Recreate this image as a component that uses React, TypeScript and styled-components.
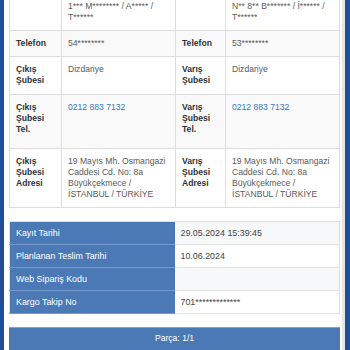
import styled, { createGlobalStyle } from "styled-components";

const GlobalStyle = createGlobalStyle`
  html, body {
    margin: 0;
    padding: 0;
    background: #1d4f9a;
  }
  * {
    box-sizing: border-box;
  }
`;

const Frame = styled.div`
  display: flex;
  width: 350px;
  height: 350px;
  overflow: hidden;
  padding: 0 5px 0 4px;
  background: #1d4f9a;
  font-family: "Liberation Sans", Arial, sans-serif;
`;

const Panel = styled.div`
  flex: 1;
  display: flex;
  flex-direction: column;
  gap: 13px;
  padding: 0 2px 0 5px;
  background: #fff;
  border-right: 3px solid #e6e6e6;
`;

const InfoTable = styled.table`
  width: 100%;
  margin-top: -7px;
  border-collapse: collapse;
  table-layout: fixed;
  font-size: 8.6px;
  line-height: 11px;
  border: 1px solid #dddddd;
`;

const InfoRow = styled.tr<{ $minH?: number }>`
  height: ${(p) => (p.$minH ? `${p.$minH}px` : "auto")};
  &:nth-child(even) {
    background: #f9f9f9;
  }
`;

const Label = styled.td`
  vertical-align: top;
  padding: 7px 6px;
  border: 1px solid #dddddd;
  color: #333;
  font-weight: bold;
`;

const Value = styled.td`
  vertical-align: top;
  padding: 7px 6px;
  border: 1px solid #dddddd;
  color: #5a5a5a;
`;

const Phone = styled.a`
  color: #3f78bd;
  text-decoration: none;
`;

const Masked = styled.span`
  white-space: nowrap;
`;

const SummaryTable = styled.table`
  width: 100%;
  border-collapse: collapse;
  table-layout: fixed;
  font-size: 8.9px;
  line-height: 11px;
  border: 1px solid #dddddd;
`;

const SummaryRow = styled.tr`
  &:nth-child(odd) td:last-child {
    background: #f7f8fa;
  }
`;

const SummaryLabel = styled.td`
  width: 165px;
  padding: 5.5px 6px 5.5px;
  background: #4a79b5;
  color: #fff;
  border-bottom: 1px solid #7199cb;
`;

const SummaryValue = styled.td`
  padding: 5.5px 6px 5.5px;
  color: #444;
  background: #fff;
  border-bottom: 1px solid #e3e3e3;
`;

const PartBar = styled.div`
  padding: 5px 0 6px;
  min-height: 26px;
  background: #4a79b5;
  border-top: 1px solid #7ea3d2;
  color: #fff;
  text-align: center;
  font-size: 8.6px;
  line-height: 11px;
`;

type Side = { label: string; value: React.ReactNode };

const infoRows: { left: Side; right: Side; minH?: number }[] = [
  {
    left: {
      label: "",
      value: (
        <>
          <Masked>1*** M******** / A***** /</Masked>
          <br />
          T******
        </>
      ),
    },
    right: {
      label: "",
      value: (
        <>
          <Masked>N** 8** B******* / İ****** /</Masked>
          <br />
          T******
        </>
      ),
    },
  },
  {
    left: { label: "Telefon", value: "54********" },
    right: { label: "Telefon", value: "53********" },
  },
  {
    left: { label: "Çıkış Şubesi", value: "Dizdariye" },
    right: { label: "Varış Şubesi", value: "Dizdariye" },
    minH: 38,
  },
  {
    left: {
      label: "Çıkış Şubesi Tel.",
      value: <Phone href="tel:02128837132">0212 883 7132</Phone>,
    },
    right: {
      label: "Varış Şubesi Tel.",
      value: <Phone href="tel:02128837132">0212 883 7132</Phone>,
    },
    minH: 54,
  },
  {
    left: {
      label: "Çıkış Şubesi Adresi",
      value: "19 Mayıs Mh. Osmangazi Caddesi Cd. No: 8a Büyükçekmece / İSTANBUL / TÜRKİYE",
    },
    right: {
      label: "Varış Şubesi Adresi",
      value: "19 Mayıs Mh. Osmangazi Caddesi Cd. No: 8a Büyükçekmece / İSTANBUL / TÜRKİYE",
    },
  },
];

const summary = [
  ["Kayıt Tarihi", "29.05.2024 15:39:45"],
  ["Planlanan Teslim Tarihi", "10.06.2024"],
  ["Web Sipariş Kodu", ""],
  ["Kargo Takip No", "701*************"],
];

export default function App() {
  return (
    <>
      <GlobalStyle />
      <Frame>
        <Panel>
          <InfoTable>
            <colgroup>
              <col style={{ width: 52 }} />
              <col style={{ width: 114 }} />
              <col style={{ width: 50 }} />
              <col />
            </colgroup>
            <tbody>
              {infoRows.map((r, i) => (
                <InfoRow key={i} $minH={r.minH}>
                  <Label>{r.left.label}</Label>
                  <Value>{r.left.value}</Value>
                  <Label>{r.right.label}</Label>
                  <Value>{r.right.value}</Value>
                </InfoRow>
              ))}
            </tbody>
          </InfoTable>

          <SummaryTable>
            <tbody>
              {summary.map(([k, v]) => (
                <SummaryRow key={k}>
                  <SummaryLabel>{k}</SummaryLabel>
                  <SummaryValue>{v}</SummaryValue>
                </SummaryRow>
              ))}
            </tbody>
          </SummaryTable>

          <PartBar>Parça: 1/1</PartBar>
        </Panel>
      </Frame>
    </>
  );
}
